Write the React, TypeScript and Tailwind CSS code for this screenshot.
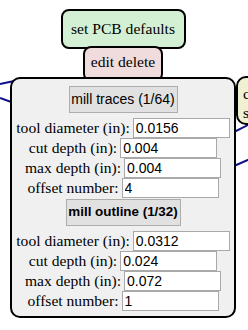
const serif = "font-['Liberation_Serif','Times_New_Roman',serif]"
const sans = "font-['Liberation_Sans',Arial,sans-serif]"

const traces = [
  { label: "tool diameter (in):", value: "0.0156" },
  { label: "cut depth (in):", value: "0.004" },
  { label: "max depth (in):", value: "0.004" },
  { label: "offset number:", value: "4" },
]

const outline = [
  { label: "tool diameter (in):", value: "0.0312" },
  { label: "cut depth (in):", value: "0.024" },
  { label: "max depth (in):", value: "0.072" },
  { label: "offset number:", value: "1" },
]

function Field({ label, value }: { label: string; value: string }) {
  return (
    <div className="flex h-[20px] items-center justify-center gap-[3px]">
      <span className={`${serif} text-[15.6px] leading-[20px] text-black`}>{label}</span>
      <input
        readOnly
        value={value}
        className={`${sans} h-[20px] w-[97px] border border-[#a9a9a9] bg-white px-[2px] text-[14px] text-black outline-none`}
      />
    </div>
  )
}

export default function App() {
  return (
    <div className="relative h-[330px] w-[248px] overflow-hidden bg-white">
      {/* wires behind the modules */}
      <svg className="absolute left-0 top-0" width="248" height="330">
        <g stroke="#10108a" strokeWidth="2" fill="none">
          <line x1="0" y1="84" x2="14" y2="81" />
          <line x1="0" y1="98" x2="14" y2="103" />
          <line x1="234" y1="132" x2="250" y2="124" />
          <line x1="234" y1="166" x2="250" y2="159" />
        </g>
      </svg>

      {/* neighbour module, mostly off screen */}
      <div className={`absolute left-[236px] top-[76px] h-[49px] w-[80px] overflow-hidden rounded-[10px] border-2 border-black bg-[#f0f0d2] px-[5px] pt-[6px] ${serif} text-[15.6px] leading-[19px] text-black`}>
        <div>convert</div>
        <div>show</div>
      </div>

      {/* module */}
      <div className="absolute left-[10px] top-[9px] flex w-[226px] flex-col items-center">
        <div className={`relative flex h-[40px] w-[125px] items-center justify-center rounded-[8px] border-2 border-black bg-[#d4f0d4] ${serif} text-[15.6px] text-black`}>
          set PCB defaults
        </div>
        <div className={`relative -mt-[3px] flex h-[36px] w-[80px] justify-center rounded-[8px] border-2 border-black bg-[#f0dcdc] pt-[4px] ${serif} text-[15.6px] leading-[20px] text-black`}>
          edit delete
        </div>
        <div className="relative -mt-[5px] flex w-[226px] flex-col items-center rounded-[10px] border-2 border-black bg-[#f0f0f0] pb-[5px] pt-[7px]">
          <button className={`h-[27px] w-[109px] whitespace-nowrap border border-[#adadad] bg-[#e1e1e1] ${sans} text-[14px] text-black`}>
            mill traces (1/64)
          </button>
          <div className="mt-[5px] flex w-full flex-col">
            {traces.map((f) => (
              <Field key={f.label} {...f} />
            ))}
          </div>
          <button className={`mt-[1px] h-[27px] w-[115px] whitespace-nowrap border border-[#adadad] bg-[#e1e1e1] ${sans} text-[13.4px] font-bold text-black`}>
            mill outline (1/32)
          </button>
          <div className="mt-[5px] flex w-full flex-col">
            {outline.map((f) => (
              <Field key={f.label} {...f} />
            ))}
          </div>
        </div>
      </div>
    </div>
  )
}
